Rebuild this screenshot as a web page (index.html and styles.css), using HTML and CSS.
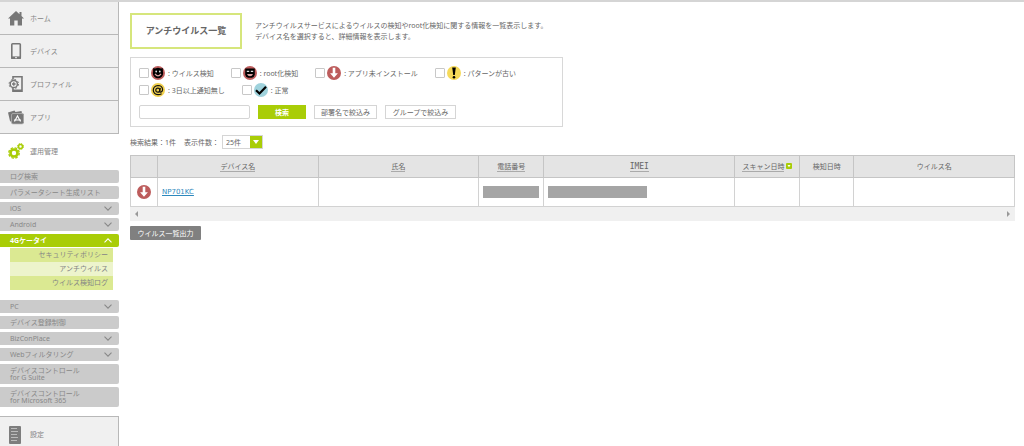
FILE: index.html
```
<!DOCTYPE html>
<html lang="ja">
  <head>
    <title>アンチウイルス一覧</title>
    <meta charset="UTF-8">
    <link rel="stylesheet" href="styles.css">
  </head>

  <body>
    <!-- Shared status icons -->
    <svg class="defs" width="0" height="0" aria-hidden="true">
      <symbol id="chevron" viewBox="0 0 8 5"><path d="M.5.7 4 4.2 7.5.7" fill="none" stroke="currentColor" stroke-width="1.1"/></symbol>
      <symbol id="notinstalled" viewBox="0 0 14 14"><circle cx="7" cy="7" r="7" fill="#bd5c5c"/><path d="M5.700 1.800h2.600v5.400h2.600L7 11.800 3.100 7.200h2.600z" fill="#fff"/></symbol>
    </svg>

    <div class="page">
      <div class="sidebar">
        <ul class="mainnav">
          <li><a href="#">
            <svg viewBox="0 0 16 16"><path d="M8 1 0 8.500h2V15.500h4.300v-5h3.400v5H14V8.500h2l-2.500-2.400V2h-2v2.200z" fill="#777"/></svg>
            ホーム</a></li>
          <li><a href="#">
            <svg viewBox="0 0 16 16"><rect x="3.800" y=".8" width="8.500" height="14.400" rx=".8" fill="none" stroke="#777" stroke-width="1.600"/><path d="M3.200 13.400h9.600V16H3.200z" fill="#777"/><path d="M7 14.700h2" stroke="#eee"/></svg>
            デバイス</a></li>
          <li><a href="#">
            <svg viewBox="0 0 16 16"><path d="M5 3.500V.800h9v14.400H5V12.500" fill="none" stroke="#777" stroke-width="1.600"/><path d="M4.500 14.500H14" stroke="#777" stroke-width="2"/><circle cx="5.800" cy="8" r="3.600" fill="#f0f0f0" stroke="#777" stroke-width="1.500"/><circle cx="5.800" cy="8" r="4.700" fill="none" stroke="#777" stroke-dasharray="1.850 1.841"/><path d="M4 8h3.600M5.800 6.200v3.600" stroke="#777" stroke-width="1.400"/></svg>
            プロファイル</a></li>
          <li><a href="#">
            <svg viewBox="0 0 16 16"><path d="m0 3.500 6.500-2 1 1.500 6-1 .5 2.500L16 5v9l-10 1-4-3z" fill="#777"/><rect x="3.500" y="4.500" width="12" height="10.500" rx="1.500" fill="#777" stroke="#bbb" stroke-width=".7"/><path d="M6.500 12.500 9.500 7l3 5.500M6 11h7" fill="none" stroke="#fff" stroke-width="1.100"/></svg>
            アプリ</a></li>
          <li class="current"><a href="#">
            <svg viewBox="0 0 16 16"><g fill="none" stroke="#a9cd07"><circle cx="6" cy="10" r="3.500" stroke-width="2.600"/><circle cx="6" cy="10" r="5.200" stroke-width="1.400" stroke-dasharray="2.500 1.584"/><circle cx="12.500" cy="3.500" r="2" stroke-width="1.600"/><circle cx="12.500" cy="3.500" r="3" stroke-dasharray="1.400 .956"/></g></svg>
            運用管理</a></li>
        </ul>

        <ul class="submenu">
          <li><a href="#">ログ検索</a></li>
          <li><a href="#">パラメータシート生成リスト</a></li>
          <li><a href="#">iOS<svg><use href="#chevron"/></svg></a></li>
          <li><a href="#">Android<svg><use href="#chevron"/></svg></a></li>
          <li class="open"><a href="#">4Gケータイ<svg><use href="#chevron"/></svg></a>
            <ul class="leaf">
              <li><a href="#">セキュリティポリシー</a></li>
              <li class="selected"><a href="#">アンチウイルス</a></li>
              <li><a href="#">ウイルス検知ログ</a></li>
            </ul>
          </li>
          <li><a href="#">PC<svg><use href="#chevron"/></svg></a></li>
          <li><a href="#">デバイス登録制御</a></li>
          <li><a href="#">BizConPlace<svg><use href="#chevron"/></svg></a></li>
          <li><a href="#">Webフィルタリング<svg><use href="#chevron"/></svg></a></li>
          <li><a href="#">デバイスコントロール<br>for G Suite</a></li>
          <li><a href="#">デバイスコントロール<br>for Microsoft 365</a></li>
        </ul>

        <a class="settings" href="#">
          <svg viewBox="0 0 12 18"><rect width="12" height="18" rx="1" fill="#7d7d7d"/><path d="M2 2.500h6M2 5.500h7M2 8.500h6M2 11.500h7M2 14.500h6" stroke="#bbb"/></svg>
          設定</a>
      </div>

      <div class="main">
        <div class="heading">
          <h1>アンチウイルス一覧</h1>
          <p>アンチウイルスサービスによるウイルスの検知やroot化検知に関する情報を一覧表示します。<br>
          デバイス名を選択すると、詳細情報を表示します。</p>
        </div>

        <!-- Search conditions -->
        <form class="search" action="">
          <div class="checks">
            <label><input type="checkbox">
              <svg viewBox="0 0 14 14"><circle cx="7" cy="7" r="7" fill="#bd5c5c"/><circle cx="7" cy="7" r="5.200"/><path d="M2 5.500 2.300 2l3 1zM12 5.500 11.700 2l-3 1z"/><path d="M4 7.800q3 4 6 0" fill="none" stroke="#d9a0a0" stroke-width="1.200"/><circle cx="5.200" cy="5.500" r=".9" fill="#ddd"/><circle cx="8.800" cy="5.500" r=".9" fill="#ddd"/></svg>
              <span>: ウイルス検知</span></label>
            <label><input type="checkbox">
              <svg viewBox="0 0 14 14"><circle cx="7" cy="7" r="7" fill="#bd5c5c"/><path d="M2.200 2.500h9.600v6.300q-.8 3-3 3H5.200q-2.200 0-3-3z"/><path d="M3.800 5.300h2.400M7.800 5.300h2.400" stroke="#ddd" stroke-width="1.200"/><path d="M4 8h6q-.8 2.300-3 2.300T4 8z" fill="#d9a0a0"/></svg>
              <span>: root化検知</span></label>
            <label><input type="checkbox">
              <svg><use href="#notinstalled"/></svg>
              <span>: アプリ未インストール</span></label>
            <label><input type="checkbox">
              <svg viewBox="0 0 14 14"><circle cx="7" cy="7" r="7" fill="#f6da59"/><path d="M5.200 1.500h3.600L7.800 9H6.200z"/><circle cx="7" cy="11.200" r="1.300"/></svg>
              <span>: パターンが古い</span></label>
          </div>
          <div class="checks">
            <label><input type="checkbox">
              <svg viewBox="0 0 14 14"><circle cx="7" cy="7" r="7" fill="#f0d04e"/><g fill="none" stroke="#111" stroke-width="1.200"><circle cx="6.800" cy="7.200" r="2"/><path d="M9.300 4.800 8.700 8q0 1.400 1.200 1.200 1.700-.8 1.700-2.700Q11.200 2.500 7 2.500 2.300 3 2.300 7.300 2.600 11.500 7 11.700q2 0 3.600-1"/></g></svg>
              <span>: 3日以上通知無し</span></label>
            <label><input type="checkbox">
              <svg viewBox="0 0 14 14"><circle cx="7" cy="7" r="7" fill="#9fd2dc"/><path d="m2 7.200 3.500 3.300L12 3.800" fill="none" stroke="#000" stroke-width="2.200"/></svg>
              <span>: 正常</span></label>
          </div>
          <div class="actions">
            <input type="text" name="keyword" aria-label="検索語">
            <button type="submit" class="go">検索</button>
            <button type="button" class="narrow">部署名で絞込み</button>
            <button type="button" class="group">グループで絞込み</button>
          </div>
        </form>

        <div class="result">
          <span>検索結果：1件</span>
          <label for="perpage">表示件数：</label>
          <div class="select">
            <select id="perpage"><option>25件</option><option>50件</option></select>
          </div>
        </div>

        <table>
          <colgroup>
            <col class="c-status"><col><col><col class="c-tel"><col class="c-imei"><col class="c-scan"><col class="c-found"><col>
          </colgroup>
          <thead>
            <tr>
              <th></th>
              <th><a href="#">デバイス名</a></th>
              <th><a href="#">氏名</a></th>
              <th><a href="#">電話番号</a></th>
              <th><a class="imei" href="#">IMEI</a></th>
              <th><a href="#">スキャン日時</a> <svg class="sort" viewBox="0 0 6 6"><rect width="6" height="6" rx="1" fill="#a9cd07"/><path d="M1.500 2h3L3 4.200z" fill="#fff"/></svg></th>
              <th>検知日時</th>
              <th>ウイルス名</th>
            </tr>
          </thead>
          <tbody>
            <tr>
              <td class="status"><svg><use href="#notinstalled"/></svg></td>
              <td><a href="#">NP701KC</a></td>
              <td></td>
              <td><div class="mask"></div></td>
              <td><div class="mask mask-imei"></div></td>
              <td></td>
              <td></td>
              <td></td>
            </tr>
          </tbody>
        </table>
        <div class="scroll"><i class="prev"></i><i class="next"></i></div>

        <button type="button" class="export">ウイルス一覧出力</button>
      </div>
    </div>
  </body>
</html>
```
FILE: styles.css
```
* { box-sizing: border-box; }
body {
	margin: 0;
	font: 7px/11px "Noto Sans", "Noto Sans CJK JP", sans-serif;
	color: #666;
	background: #fff;
}
ul { list-style: none; margin: 0; padding: 0; }
a { color: inherit; text-decoration: none; }
button, input, select { font: inherit; color: inherit; margin: 0; }
svg { flex: none; }
.defs { position: absolute; }
.page {
	display: flex;
	min-height: 100vh;
	border-top: 2px solid #d5d5d5;
}

/* Side menu */
.sidebar {
	display: flex;
	flex-direction: column;
	flex: none;
	width: 119px;
	color: #858585;
}
.mainnav a {
	display: flex;
	align-items: center;
	gap: 6px;
	height: 33px;
	padding-left: 8px;
	background: #f0f0f0;
	border-right: 1px solid #b8b8b8;
	border-bottom: 1px solid #b8b8b8;
}
.mainnav svg { width: 16px; height: 16px; }
.mainnav .current a {
	height: 34px;
	background: #fff;
	border: 0;
}
.submenu {
	display: flex;
	flex-direction: column;
	gap: 3px;
	padding-top: 2px;
}
.submenu > li > a {
	display: flex;
	align-items: center;
	justify-content: space-between;
	min-height: 13px;
	padding: 3px 7px 3px 10px;
	line-height: 7px;
	color: #888;
	background: #cbcbcb;
	border-radius: 0 2px 2px 0;
}
.submenu svg { width: 8px; height: 5px; }
.submenu .open > a {
	color: #fff;
	font-weight: bold;
	background: #a9cd07;
}
.open svg { transform: rotate(180deg); }
.leaf { padding: 1px 6px 7px 10px; }
.leaf a {
	display: block;
	padding-right: 5px;
	line-height: 14px;
	text-align: right;
	background: #dbe992;
}
.leaf .selected a { background: #edf4cc; }
.settings {
	display: flex;
	flex: 1;
	gap: 9px;
	margin-top: 9px;
	padding: 9px 0 0 9px;
	line-height: 18px;
	background: #f0f0f0;
	border-top: 1px solid #b8b8b8;
	border-right: 1px solid #b8b8b8;
}
.settings svg { width: 12px; height: 18px; }

/* Contents */
.main {
	flex: 1;
	min-width: 0;
	padding: 11px 9px 0 11px;
}
.heading { display: flex; align-items: center; gap: 13px; }
h1 {
	width: 112px;
	margin: 0;
	border: 2px solid #d6e67c;
	font-size: 9px;
	line-height: 32px;
	text-align: center;
}
.heading p { margin: 0; }
.search {
	max-width: 433px;
	margin-top: 8px;
	padding: 8px 8px 7px;
	border: 1px solid #d8d8d8;
}
.checks { display: flex; gap: 17px; margin-bottom: 3px; }
.checks label { display: flex; align-items: center; height: 14px; }
.checks svg { width: 14px; height: 14px; margin: 0 3px 0 2px; }
.checks input {
	appearance: none;
	width: 10px;
	height: 10px;
	border: 1px solid #c8c8c8;
	border-radius: 1px;
}
.checks input:checked { background: #a9cd07; }
.actions { display: flex; gap: 8px; margin-top: 8px; }
.actions input, .actions button {
	height: 14px;
	padding: 0;
	border: 1px solid #d5d5d5;
	line-height: 11px;
	background: #fff;
}
.actions input { width: 111px; border-radius: 2px; }
.actions .go {
	width: 48px;
	border-color: #a9cd07;
	color: #fff;
	font-weight: bold;
	background: #a9cd07;
}
.actions .narrow { width: 63px; }
.actions .group { width: 71px; }
.result { display: flex; align-items: center; margin: 8px 0 6px; }
.result label { margin-left: 8px; }
.select { position: relative; margin-left: 3px; }
.select:after {
	content: "";
	position: absolute;
	top: 5px;
	right: 4px;
	border: 3px solid transparent;
	border-top: 4px solid #fff;
	border-bottom: 0;
	pointer-events: none;
}
.select select {
	appearance: none;
	display: block;
	width: 41px;
	height: 14px;
	padding: 0 0 0 3px;
	border: 1px solid #d5d5d5;
	border-radius: 0;
	background: linear-gradient(#a9cd07, #a9cd07) right / 13px 100% no-repeat border-box #fff;
}

table {
	width: 100%;
	table-layout: fixed;
	border-collapse: collapse;
}
.c-status { width: 27px; }
.c-tel, .c-scan { width: 65px; }
.c-imei { width: 191px; }
.c-found { width: 54px; }
th, td { padding: 0 4px; border: 1px solid #d2d2d2; }
th {
	height: 22px;
	border-color: #c5c5c5;
	font-weight: normal;
	white-space: nowrap;
	background: #e4e4e4;
}
th a { border-bottom: 1px solid #aaa; }
th .imei { font-family: "DejaVu Sans Mono", monospace; font-size: 8px; line-height: 7px; }
.sort { width: 6px; height: 6px; }
td { height: 29px; }
td a { color: #2d88bd; text-decoration: underline; font-family: "DejaVu Sans", sans-serif; }
.status svg { display: block; width: 14px; height: 14px; margin: 0 auto; }
.status { padding: 0; }
.mask { height: 12px; background: #a5a5a5; }
.mask-imei { width: 99px; }
.scroll {
	display: flex;
	align-items: center;
	justify-content: space-between;
	height: 14px;
	padding: 0 5px;
	background: #f0f0f0;
}
.scroll i { border: 3px solid transparent; }
.scroll .prev { border-left: 0; border-right-color: #999; }
.scroll .next { border-right: 0; border-left-color: #999; }
.export {
	display: block;
	width: 71px;
	height: 14px;
	margin-top: 5px;
	padding: 0;
	border: 0;
	border-radius: 1px;
	color: #fff;
	background: #808080;
}
```
